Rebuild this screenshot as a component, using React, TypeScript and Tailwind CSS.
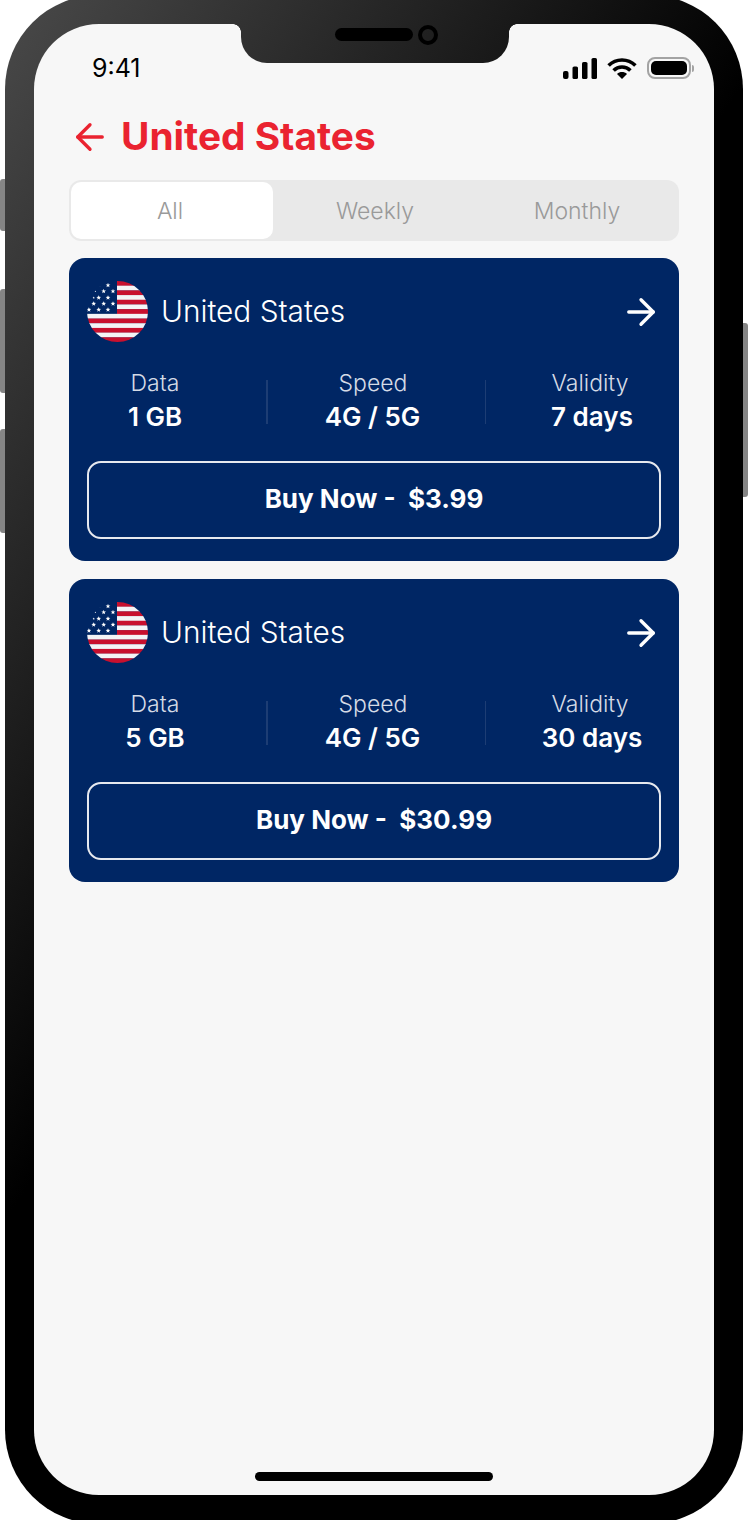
import { ArrowLeft, ArrowRight } from "lucide-react";

const stars = [
  [21, 4.3, 2.5],
  [12.7, 5, 0.8],
  [8.3, 10.3, 1],
  [16.7, 10.3, 2.5],
  [26, 10.3, 2.5],
  [6.7, 16.7, 1.2],
  [11.7, 16.7, 2.5],
  [21, 16.7, 2.5],
  [6.7, 22.7, 2.5],
  [16.7, 22.7, 2.5],
  [26, 22.7, 2.5],
  [1.9, 28.7, 2.5],
  [11.7, 28.7, 2.5],
  [21, 28.7, 2.5],
];

function starPoints(cx: number, cy: number, r: number) {
  const pts: string[] = [];
  for (let i = 0; i < 10; i++) {
    const rad = i % 2 === 0 ? r : r * 0.42;
    const a = -Math.PI / 2 + (i * Math.PI) / 5;
    pts.push(`${cx + rad * Math.cos(a)},${cy + rad * Math.sin(a)}`);
  }
  return pts.join(" ");
}

function Flag() {
  const h = 61 / 13;
  return (
    <svg width="61" height="61" viewBox="0 0 61 61" className="shrink-0 rounded-full">
      {Array.from({ length: 13 }, (_, i) => (
        <rect
          key={i}
          x={i < 7 ? 30 : 0}
          y={i * h}
          width={i < 7 ? 31 : 61}
          height={h + 0.2}
          fill={i % 2 === 0 ? "#c8102e" : "#f4f4f6"}
        />
      ))}
      {stars.map(([x, y, r]) => (
        <polygon key={`${x}-${y}`} points={starPoints(x, y, r)} fill="#fff" />
      ))}
    </svg>
  );
}

function SignalIcon() {
  return (
    <svg width="34" height="21" viewBox="0 0 34 21" fill="#000">
      <rect x="0" y="13" width="5.5" height="8" rx="2" />
      <rect x="9.5" y="8.5" width="5.5" height="12.5" rx="1.6" />
      <rect x="19" y="4" width="5.5" height="17" rx="1.6" />
      <rect x="28.5" y="0" width="5.5" height="21" rx="1.6" />
    </svg>
  );
}

function WifiIcon() {
  return (
    <svg width="30" height="21" viewBox="0 0 30 21" fill="none" stroke="#000" strokeWidth="3.6">
      <path d="M1.6 7.6C9 .2 21 .2 28.4 7.6" />
      <path d="M6.6 12.4c4.6-4.6 12.2-4.6 16.8 0" />
      <path d="M15 21l-5-5c2.8-2.6 7.2-2.6 10 0z" fill="#000" stroke="none" />
    </svg>
  );
}

function BatteryIcon() {
  return (
    <div className="flex items-center gap-[1px]">
      <div className="flex h-[22px] w-[44px] rounded-[8px] border-2 border-[#a3a3a3] p-[2px]">
        <div className="h-full w-full rounded-[5px] bg-black" />
      </div>
      <div className="h-[7px] w-[2px] rounded-r-full bg-[#a3a3a3]" />
    </div>
  );
}

function Stat({ label, value, className, valueClass = "" }: { label: string; value: string; className: string; valueClass?: string }) {
  return (
    <div className={`flex flex-col items-center pt-[1px] ${className}`}>
      <span className="text-[23px] leading-[30px] font-light text-[#d5dbe6]">{label}</span>
      <span className={`mt-[1px] text-[26px] leading-[36px] font-semibold text-white ${valueClass}`}>{value}</span>
    </div>
  );
}

function PlanCard({ data, validity, price }: { data: string; validity: string; price: string }) {
  return (
    <div className="flex h-[303px] flex-col rounded-[16px] bg-[#002664] px-[18px] pt-[23px]">
      <div className="flex items-center">
        <Flag />
        <span className="ml-[13px] text-[29.8px] leading-[61px] font-light text-white">United States</span>
        <ArrowRight className="-mr-[1px] ml-auto text-white" size={42} strokeWidth={1.9} />
      </div>
      <div className="mt-[25px] grid h-[66px] grid-cols-[180px_218px_1fr] items-start">
        <Stat label="Data" value={data} className="pr-[44px]" />
        <div className="relative">
          <div className="absolute top-[13px] -left-[1px] h-[44px] w-[1.5px] bg-[#1d3d74]" />
          <div className="absolute top-[13px] -right-[1px] h-[44px] w-[1.5px] bg-[#1d3d74]" />
          <Stat label="Speed" value="4G / 5G" className="pr-[6px]" valueClass="-ml-[1px]" />
        </div>
        <Stat label="Validity" value={validity} className="pl-[34px]" valueClass="ml-[4px]" />
      </div>
      <button className="mt-[28px] h-[78px] rounded-[14px] border-2 border-[#e6e9ef] pb-[3px] text-[26px] font-bold text-white">
        Buy Now -&nbsp; {price}
      </button>
    </div>
  );
}

export default function App() {
  return (
    <div className="relative h-[1520px] w-[748px] overflow-hidden bg-white font-['Inter',sans-serif]">
      <div className="absolute top-[179px] left-0 h-[52px] w-[6px] rounded-l-[3px] bg-[#858585]" />
      <div className="absolute top-[289px] left-0 h-[104px] w-[6px] rounded-l-[3px] bg-[#858585]" />
      <div className="absolute top-[429px] left-0 h-[104px] w-[6px] rounded-l-[3px] bg-[#858585]" />
      <div className="absolute top-[323px] right-0 h-[174px] w-[6px] rounded-r-[3px] bg-[#858585]" />

      <div className="relative mx-[5px] -mt-[5px] h-[1529px] rounded-[94px] bg-[linear-gradient(123deg,#4a4a4a_0%,#000_46%)] bg-fixed p-[29px]">
        <div className="relative flex h-full flex-col rounded-[65px] bg-[#f7f7f7]">
          <div className="absolute top-0 left-[207px] flex h-[39px] w-[268px] items-start justify-center gap-[5px] rounded-b-[26px] bg-[linear-gradient(123deg,#4a4a4a_0%,#000_46%)] bg-fixed pt-[1px] pl-[22px]">
            <div className="mt-[3px] h-[13px] w-[78px] rounded-full bg-black" />
            <div className="h-[20px] w-[20px] rounded-full border-[4px] border-black" />
          </div>
          <div className="absolute top-0 left-[199px] h-[8px] w-[8px] bg-[linear-gradient(123deg,#4a4a4a_0%,#000_46%)] bg-fixed [mask-image:radial-gradient(circle_at_0_100%,transparent_7.5px,black_8px)]" />
          <div className="absolute top-0 left-[475px] h-[8px] w-[8px] bg-[linear-gradient(123deg,#4a4a4a_0%,#000_46%)] bg-fixed [mask-image:radial-gradient(circle_at_100%_100%,transparent_7.5px,black_8px)]" />

          <div className="mt-[30px] flex h-[28px] items-center pr-[20px] pl-[58px]">
            <span className="text-[25px] leading-[28px] font-normal text-black">9:41</span>
            <div className="ml-auto flex items-center gap-[10px]">
              <SignalIcon />
              <WifiIcon />
              <BatteryIcon />
            </div>
          </div>

          <div className="mt-[26px] flex h-[58px] items-center pl-[35px]">
            <ArrowLeft className="text-[#ea2330]" size={42} strokeWidth={1.9} />
            <h1 className="ml-[10px] -translate-y-[1px] text-[38.8px] leading-[58px] font-bold text-[#ea2330]">United States</h1>
          </div>

          <div className="mx-[35px] mt-[14px] flex h-[61px] rounded-[12px] bg-[#e9e9e9] text-[23px] font-light text-[#9a9a9a]">
            <div className="m-[2px] flex w-[202px] items-center justify-center rounded-[10px] bg-white pt-[1px] pr-[4px]">All</div>
            <div className="flex w-[200px] items-center justify-center pt-[1px]">Weekly</div>
            <div className="flex flex-1 items-center justify-center pt-[1px]">Monthly</div>
          </div>

          <div className="mx-[35px] mt-[17px] flex flex-col gap-[18px]">
            <PlanCard data="1 GB" validity="7 days" price="$3.99" />
            <PlanCard data="5 GB" validity="30 days" price="$30.99" />
          </div>

          <div className="mt-auto mb-[14px] h-[9px] w-[238px] self-center rounded-full bg-black" />
        </div>
      </div>
    </div>
  );
}
